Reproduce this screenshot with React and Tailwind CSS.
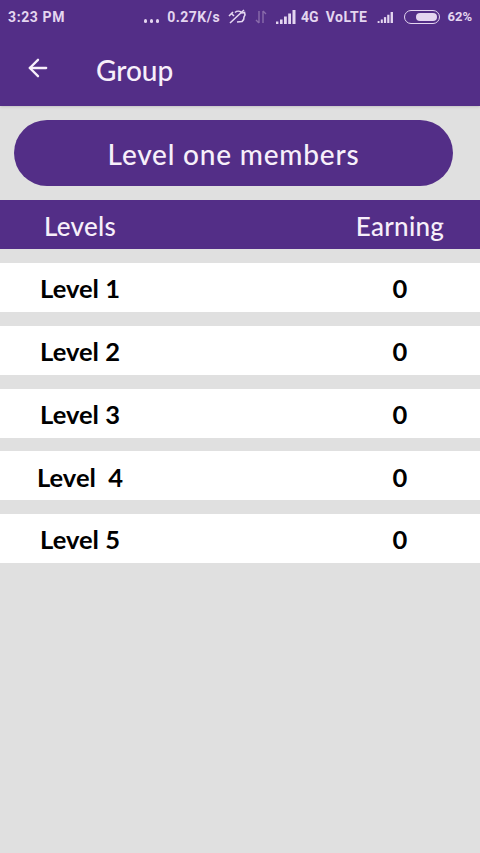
import React from "react";
import { ArrowLeft } from "lucide-react";

const levels = ["Level 1", "Level 2", "Level 3", "Level  4", "Level 5"];

const Bars = ({ className = "" }) => (
    <svg viewBox="0 0 20 14" className={className} fill="currentColor">
        <rect x="0" y="11.5" width="2.4" height="2.5" />
        <rect x="4" y="9.5" width="2.6" height="4.5" />
        <rect x="8" y="6.5" width="2.8" height="7.5" />
        <rect x="12.2" y="3.5" width="2.8" height="10.5" />
        <rect x="16.5" y="0" width="3" height="14" />
    </svg>
);

const StatusBar = () => (
    <div className="h-[34px] pl-2 pr-2 flex items-center text-[#e4d6f0] text-[14px] font-['Roboto',sans-serif] font-bold whitespace-nowrap">
        <span className="tracking-[0.6px]">3:23 PM</span>
        <div className="ml-auto flex gap-[2.500px] mt-[8px]">
            <span className="w-[3.5px] h-[3.5px] rounded-full bg-[#e4d6f0]" />
            <span className="w-[3.5px] h-[3.5px] rounded-full bg-[#e4d6f0]" />
            <span className="w-[3.5px] h-[3.5px] rounded-full bg-[#e4d6f0]" />
        </div>
        <span className="ml-[8px] tracking-[0.5px]">0.27K/s</span>
        {/* muted alarm */}
        <svg viewBox="0 0 20 16" className="w-[20px] h-[16px] ml-[8px]" fill="none" stroke="currentColor" strokeWidth="1.6">
            <path d="M7 3.5a5 5 0 0 1 7 .5l2.5-.5.5 2.500-1 2a5 5 0 0 1-2 4.500l-5 .5" />
            <path d="M2 14 16 1M1 7l4-4M4 5l2 2" />
        </svg>
        {/* data arrows */}
        <svg viewBox="0 0 12 14" className="w-[12px] h-[14px] ml-[7px] text-[#8a6cab]" fill="none" stroke="currentColor" strokeWidth="1.4">
            <path d="M4 1v12M1 10l3 3M8 13V1M8 1l3 3" />
        </svg>
        <Bars className="w-[20px] h-[14px] ml-[9px]" />
        <span className="ml-[5px]">4G</span>
        <span className="ml-[7px] tracking-[0.5px]">VoLTE</span>
        <Bars className="w-[17px] h-[11px] ml-[10px]" />
        {/* battery */}
        <div className="ml-[10px] w-[36px] h-[14px] rounded-full border border-[#e4d6f0] pl-[11px] pr-[2px] py-[2px]">
            <div className="h-full rounded-full bg-[#e4d6f0]" />
        </div>
        <span className="ml-[7px] text-[13px]">62%</span>
    </div>
);

const App = () => {
    return (
        <div className="w-[480px] h-[853px] bg-[#e0e0e0] font-['Lato',sans-serif] overflow-hidden">
            <div className="h-[106px] bg-[#532e87] shadow-sm">
                <StatusBar />
                <div className="h-[72px] flex items-center text-[#f7effa]">
                    <ArrowLeft className="w-[28px] h-[28px] ml-[24px] mb-[4px]" strokeWidth={2} />
                    <span className="ml-[44px] text-[28px] font-medium">Group</span>
                </div>
            </div>

            <div className="mt-[14px] ml-[14px] w-[439px] h-[66px] pt-[2px] rounded-[33px] bg-[#532e87] flex items-center justify-center text-[#f7effa] text-[28px] font-medium tracking-[0.8px]">
                Level one members
            </div>

            <div className="mt-[14px] h-[49px] pt-[3px] bg-[#532e87] flex items-center justify-between text-[#f7effa] text-[26px] font-medium tracking-[0.3px]">
                <span className="w-[160px] text-center">Levels</span>
                <span className="w-[160px] text-center">Earning</span>
            </div>

            <div className="mt-[14px] flex flex-col gap-[13.75px]">
                {levels.map((level) => (
                    <div key={level} className="h-[49px] pt-[2px] bg-white flex items-center text-black text-[25.500px] font-bold">
                        <span className="w-[160px] text-center whitespace-pre">{level}</span>
                        <span className="ml-[160px] w-[160px] text-center">0</span>
                    </div>
                ))}
            </div>
        </div>
    );
};

export default App;
